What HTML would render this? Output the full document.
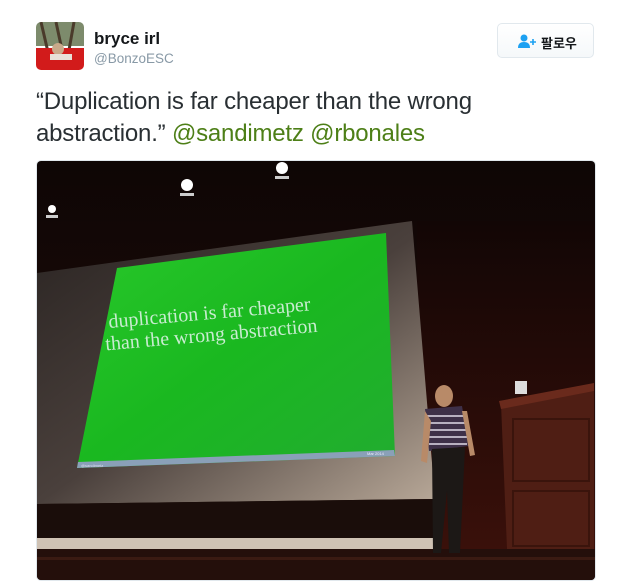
<!DOCTYPE html>
<html><head><meta charset="utf-8"><style>
body{margin:0;width:631px;height:588px;background:#fff;font-family:"Liberation Sans","Noto Sans CJK KR",sans-serif;position:relative;overflow:hidden}
.av{position:absolute;left:36px;top:22px;width:48px;height:48px;border-radius:5px;overflow:hidden}
.name{position:absolute;left:94px;top:29px;font-weight:bold;font-size:17px;color:#14171a}
.handle{position:absolute;left:94px;top:51px;font-size:13.5px;color:#8899a6}
.btn{position:absolute;left:497px;top:23px;width:97px;height:35px;border:1px solid #e1e8ed;border-radius:5px;background:linear-gradient(#fff,#f5f8fa);box-sizing:border-box}
.btn span{position:absolute;left:43px;top:9px;font-size:13px;font-weight:bold;color:#14171a}
.txt{position:absolute;left:36px;top:86px;font-size:24px;line-height:32px;color:#292f33;letter-spacing:-0.2px}
.txt b{font-weight:normal;color:#4d7f17}
.ph{position:absolute;left:36px;top:160px;width:560px;height:421px;border-radius:5px;overflow:hidden;border:1px solid #e1e8ed;box-sizing:border-box}
</style></head><body>
<div class="av"><svg width="48" height="48"><rect width="48" height="24" fill="#7d8b6c"/><path d="M5 0 L12 30 M20 0 L26 28 M38 0 L33 28" stroke="#4a3a2a" stroke-width="3"/><rect y="26" width="48" height="22" fill="#d21b1b"/><ellipse cx="22" cy="27" rx="6" ry="6" fill="#c9a98a"/><rect x="14" y="32" width="22" height="6" fill="#e8e0d8"/></svg></div>
<div class="name">bryce irl</div>
<div class="handle">@BonzoESC</div>
<div class="btn"><svg style="position:absolute;left:20px;top:10px" width="20" height="14"><circle cx="6" cy="4" r="3.5" fill="#1da1f2"/><path d="M0 14 Q0 8 6 8 Q12 8 12 14Z" fill="#1da1f2"/><path d="M15 5v6M12 8h6" stroke="#1da1f2" stroke-width="1.6"/></svg><span>팔로우</span></div>
<div class="txt">“Duplication is far cheaper than the wrong<br>abstraction.” <b>@sandimetz @rbonales</b></div>
<div class="ph"><svg width="560" height="421" viewBox="0 0 560 421">
<defs><linearGradient id="bg" x1="0" y1="0" x2="0" y2="1"><stop offset="0" stop-color="#0e0605"/><stop offset="0.6" stop-color="#1c0a07"/><stop offset="1" stop-color="#1a0906"/></linearGradient>
<linearGradient id="fr" x1="0" y1="0" x2="1" y2="1"><stop offset="0" stop-color="#2a2422"/><stop offset="0.5" stop-color="#4a403c"/><stop offset="1" stop-color="#b8a898"/></linearGradient>
<linearGradient id="gr" x1="0" y1="0" x2="1" y2="1"><stop offset="0" stop-color="#28c82a"/><stop offset="0.5" stop-color="#1ab820"/><stop offset="1" stop-color="#22ac30"/></linearGradient>
<linearGradient id="cu" x1="0" y1="0" x2="0" y2="1"><stop offset="0" stop-color="#120605"/><stop offset="1" stop-color="#3a100a"/></linearGradient></defs>
<rect width="560" height="421" fill="url(#bg)"/>
<rect x="380" y="60" width="180" height="330" fill="url(#cu)"/>
<polygon points="0,112 375,60 398,338 0,343" fill="url(#fr)"/>
<polygon points="80,107 349,72 358,295 40,307" fill="url(#gr)"/>
<polygon points="41,301 357,289 358,295 40,307" fill="#8aa0b8"/>
<text x="44" y="306" font-size="4" fill="#dde">@sandimetz</text><text x="330" y="294" font-size="4" fill="#eef">Mar 2014</text>
<g transform="translate(72,167) rotate(-5)" font-family="Liberation Serif,serif" font-size="20" fill="#c8ecd0"><text x="0" y="0">duplication is far cheaper</text><text x="-5" y="22">than the wrong abstraction</text></g>
<polygon points="0,343 398,338 400,377 0,377" fill="#1a0d0a"/>
<rect x="0" y="377" width="400" height="11" fill="#cfc2b4"/>
<rect x="0" y="388" width="560" height="33" fill="#240f0b"/>
<rect x="0" y="396" width="560" height="3" fill="#3a1a12"/>
<circle cx="15" cy="48" r="4" fill="#fff"/><rect x="9" y="54" width="12" height="3" fill="#ccc"/>
<circle cx="150" cy="24" r="6" fill="#fff"/><rect x="143" y="32" width="14" height="3" fill="#ccc"/>
<circle cx="245" cy="7" r="6" fill="#fff"/><rect x="238" y="15" width="14" height="3" fill="#ccc"/>
<polygon points="464,243 557,228 557,388 470,388" fill="#4f1e14"/>
<polygon points="462,240 557,222 557,230 464,248" fill="#6a2a1c"/>
<rect x="476" y="258" width="76" height="62" fill="none" stroke="#3a140c" stroke-width="2"/>
<rect x="476" y="330" width="76" height="55" fill="none" stroke="#3a140c" stroke-width="2"/>
<rect x="478" y="220" width="12" height="13" fill="#ddd"/>
<ellipse cx="407" cy="235" rx="9" ry="11" fill="#b88a68"/>
<path d="M388 248 L425 245 L432 285 L392 290Z" fill="#3e3048"/>
<path d="M389 255 h38 M389 262 h39 M390 269 h39 M391 276 h39 M392 283 h38" stroke="#b8b0c0" stroke-width="2"/>
<path d="M388 250 L384 300 L390 302 L394 260Z M425 250 L433 295 L438 294 L430 250Z" fill="#b88a68"/>
<path d="M395 288 L428 286 L423 392 L412 392 L410 330 L404 392 L396 392Z" fill="#1c1816"/>
</svg></div>
</body></html>
